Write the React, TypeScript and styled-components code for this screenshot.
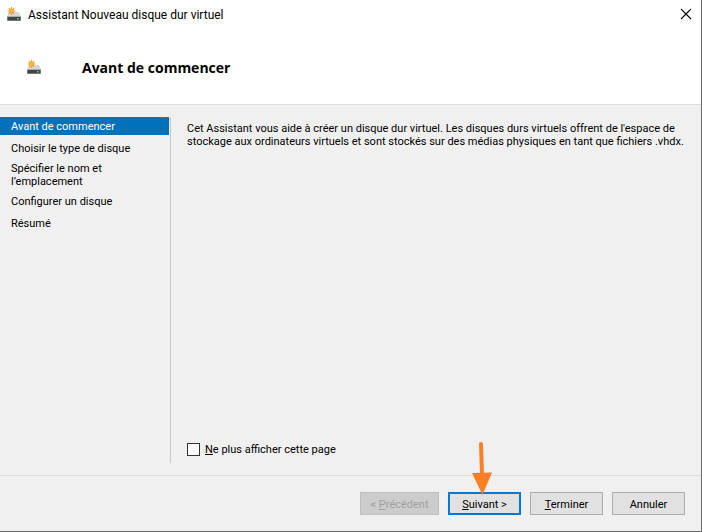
import React from "react";
import styled, { createGlobalStyle, css } from "styled-components";

const GlobalStyle = createGlobalStyle`
  *, *::before, *::after { box-sizing: border-box; }
  body { margin: 0; background: #f0f0f0; }
`;

const Dialog = styled.div`
  display: flex;
  flex-direction: column;
  min-height: 100vh;
  border-right: 1px solid #6a6a6a;
  border-bottom: 1px solid #6a6a6a;
  background: #f0f0f0;
  color: #000;
  font: 11px/13px Roboto, Tahoma, sans-serif;
`;

const Header = styled.header`
  background: #fff;
  border-bottom: 1px solid #dfdfdf;
`;

const TitleBar = styled.div`
  display: flex;
  align-items: center;
  gap: 7px;
  height: 28px;
  padding: 0 9px 0 7px;
`;

const WindowTitle = styled.span`
  flex: 1;
  padding-top: 2px;
  font-size: 12px;
  line-height: 16px;
`;

const CloseButton = styled.button`
  display: flex;
  padding: 0;
  border: 0;
  background: none;
`;

const Banner = styled.div`
  display: flex;
  align-items: center;
  gap: 41px;
  height: 76px;
  padding: 2px 27px 0;
`;

const Heading = styled.h1`
  margin: 0;
  padding-top: 2px;
  font: bold 14px/20px "Open Sans", sans-serif;
`;

const Body = styled.div`
  display: flex;
  flex: 1;
  padding: 12px 0;
`;

const Steps = styled.nav`
  display: flex;
  flex-direction: column;
  gap: 4px;
  flex: 0 0 171px;
  padding-right: 1px;
  border-right: 1px solid #c8c8c8;
`;

const Step = styled.a<{ $current?: boolean }>`
  display: flex;
  align-items: center;
  min-height: 18px;
  padding: 1px 36px 0 11px;
  color: ${(p) => (p.$current ? "#fff" : "#000")};
  background: ${(p) => (p.$current ? "#0072bc" : "transparent")};
  text-decoration: none;
`;

const Content = styled.main`
  display: flex;
  flex-direction: column;
  justify-content: space-between;
  flex: 1;
  padding: 5px 16px 7px;
`;

const Intro = styled.p`
  margin: 0;
`;

const CheckLabel = styled.label`
  display: flex;
  align-items: center;
  gap: 5px;
`;

const Checkbox = styled.input`
  appearance: none;
  width: 13px;
  height: 13px;
  margin: 0;
  border: 1px solid #333;
  background: #fff;
  &:checked { background: #0078d7; }
`;

const Footer = styled.footer`
  display: flex;
  justify-content: flex-end;
  gap: 9px;
  padding: 16px;
  border-top: 1px solid #dfdfdf;
`;

const Button = styled.button<{ $primary?: boolean; $wide?: boolean }>`
  position: relative;
  width: ${(p) => (p.$wide ? 79 : 73)}px;
  height: 23px;
  padding: 1px 0 0;
  border: 1px solid #adadad;
  background: #e1e1e1;
  color: #000;
  font: inherit;
  white-space: nowrap;
  ${(p) => p.$primary && css`border: 2px solid #0078d7;`}
  &:disabled {
    border-color: #bfbfbf;
    background: #ccc;
    color: #a0a0a0;
  }
`;

const Arrow = styled.svg`
  position: absolute;
  left: 22px;
  bottom: 18px;
  pointer-events: none;
`;

const DiskIcon = () => (
  <svg width="14" height="14" viewBox="0 0 14 14" aria-hidden="true">
    <path d="M2 5h10l2 4.5H0z" fill="#d6d7db" />
    <path d="M0 9h14v5H0z" fill="#a9abae" />
    <path d="M.5 10h13v3.5H.5z" fill="#414543" />
    <path d="M10 11h1.6v1.4H10z" fill="#3ff04b" />
    <path d="M4.5 0v8M.5 4h8M1.7 1.2l5.6 5.6M7.3 1.2L1.7 6.8" stroke="#f0a21c" strokeWidth="1.2" />
    <circle cx="4.5" cy="4" r="1.9" fill="#ffc65a" stroke="#efa020" strokeWidth="1" />
  </svg>
);

const steps = [
  "Avant de commencer",
  "Choisir le type de disque",
  "Spécifier le nom et l’emplacement",
  "Configurer un disque",
  "Résumé",
];

export default function App() {
  return (
    <>
      <GlobalStyle />
      <Dialog role="dialog" aria-label="Assistant Nouveau disque dur virtuel">
        <Header>
          <TitleBar>
            <DiskIcon />
            <WindowTitle>Assistant Nouveau disque dur virtuel</WindowTitle>
            <CloseButton aria-label="Fermer">
              <svg width="12" height="12" viewBox="0 0 12 12">
                <path d="M1 1l10 10M11 1L1 11" stroke="#000" strokeWidth="1.1" />
              </svg>
            </CloseButton>
          </TitleBar>
          <Banner>
            <DiskIcon />
            <Heading>Avant de commencer</Heading>
          </Banner>
        </Header>
        <Body>
          <Steps>
            {steps.map((label, i) => (
              <Step key={label} href="#" $current={i === 0} aria-current={i === 0 ? "step" : undefined}>
                {label}
              </Step>
            ))}
          </Steps>
          <Content>
            <Intro>
              Cet Assistant vous aide à créer un disque dur virtuel. Les disques durs virtuels offrent de l'espace de
              stockage aux ordinateurs virtuels et sont stockés sur des médias physiques en tant que fichiers .vhdx.
            </Intro>
            <CheckLabel>
              <Checkbox type="checkbox" />
              <span><u>N</u>e plus afficher cette page</span>
            </CheckLabel>
          </Content>
        </Body>
        <Footer>
          <Button $wide disabled>&lt; <u>P</u>récédent</Button>
          <Button $primary>
            <u>S</u>uivant &gt;
            <Arrow width="20" height="54" viewBox="0 0 20 54" aria-hidden="true">
              <path d="M9 3l1 30" stroke="#ff7f27" strokeWidth="4" strokeLinecap="round" />
              <path d="M0 32L20 31.5 10.5 54z" fill="#ff7f27" />
            </Arrow>
          </Button>
          <Button><u>T</u>erminer</Button>
          <Button>Annuler</Button>
        </Footer>
      </Dialog>
    </>
  );
}
